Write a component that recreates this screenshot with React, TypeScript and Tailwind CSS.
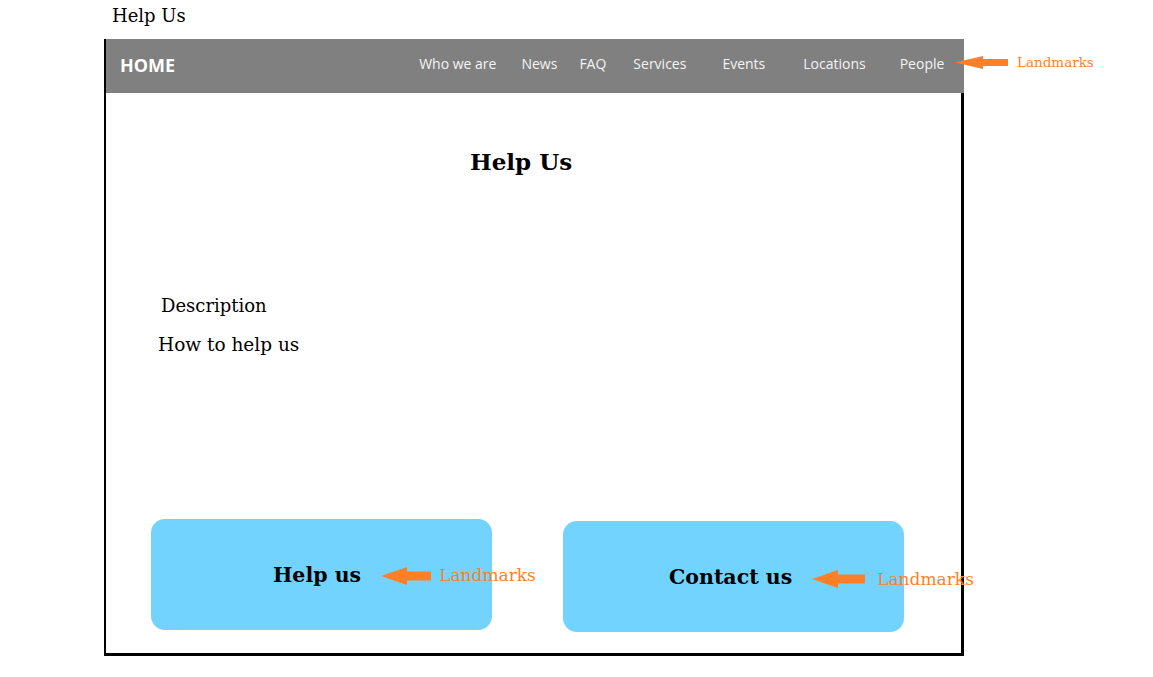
import React from "react";

const ORANGE = "#ff7f27";

function Arrow({ w, h, head, shaft }: { w: number; h: number; head: number; shaft: number }) {
  const mid = h / 2;
  return (
    <svg width={w} height={h} viewBox={`0 0 ${w} ${h}`} className="block shrink-0">
      <polygon
        points={`0,${mid} ${head},0 ${head},${mid - shaft / 2} ${w},${mid - shaft / 2} ${w},${mid + shaft / 2} ${head},${mid + shaft / 2} ${head},${h}`}
        fill={ORANGE}
      />
    </svg>
  );
}

const serif = "font-['DejaVu_Serif',serif]";
const sans = "font-['Open_Sans',sans-serif]";

function Box({ label, className, textPad, arrowGap, arrowW, labelGap }: { label: string; className: string; textPad: string; arrowGap: string; arrowW: number; labelGap: string }) {
  return (
    <div className={`relative h-[111px] w-[341px] shrink-0 rounded-[14px] bg-[#72d4fe] ${className}`}>
      <div className={`flex h-full items-center whitespace-nowrap ${textPad}`}>
        <span className={`${serif} shrink-0 text-[20.5px] font-bold text-black leading-none`}>{label}</span>
        <span className={`${arrowGap} shrink-0`}>
          <Arrow w={arrowW} h={18} head={26} shaft={9} />
        </span>
        <span className={`${serif} ${labelGap} shrink-0 text-[17px] leading-none text-[#ff7f27]`}>Landmarks</span>
      </div>
    </div>
  );
}

export default function App() {
  return (
    <div className="relative h-[677px] w-[1153px] bg-white overflow-hidden">
      <div className={`${serif} pl-[112px] pt-[4px] text-[18px] leading-[24px] text-black`}>Help Us</div>
      <div className="relative ml-[104px] mt-[11px] w-[860px] border-l-2 border-black">
        <nav className={`${sans} flex h-[54px] items-center bg-[#808080] pb-[6px] text-white`}>
          <span className="ml-[14px] mt-[3px] text-[18px] font-bold leading-none">HOME</span>
          <span className="ml-[244px] text-[14px] text-[#f4f4f4]">Who we are</span>
          <span className="ml-[25px] text-[14px] text-[#f4f4f4]">News</span>
          <span className="ml-[22px] text-[14px] text-[#f4f4f4]">FAQ</span>
          <span className="ml-[27px] text-[14px] text-[#f4f4f4]">Services</span>
          <span className="ml-[36px] text-[14px] text-[#f4f4f4]">Events</span>
          <span className="ml-[38px] text-[14px] text-[#f4f4f4]">Locations</span>
          <span className="ml-[34px] text-[14px] text-[#f4f4f4]">People</span>
        </nav>
        <div className="absolute left-[849px] top-[17px] flex items-center">
          <Arrow w={53} h={13} head={28} shaft={7} />
          <span className={`${serif} ml-[9px] text-[13.5px] leading-none text-[#ff7f27] whitespace-nowrap`}>Landmarks</span>
        </div>
        <main className="flex h-[563px] flex-col border-r-[3px] border-b-[3px] border-black">
          <h1 className={`${serif} pl-[364px] pt-[55px] text-[23px] font-bold leading-[28px] text-black`}>Help Us</h1>
          <p className={`${serif} pl-[55px] pt-[118px] text-[18px] leading-[24px] text-black`}>Description</p>
          <p className={`${serif} pl-[52px] pt-[15px] text-[18.5px] leading-[24px] text-black`}>How to help us</p>
          <div className="mt-[162px] flex items-start pl-[45px]">
            <Box label="Help us" className="" textPad="pl-[122px] pt-[2px]" arrowGap="ml-[20px]" arrowW={50} labelGap="ml-[8px]" />
            <Box label="Contact us" className="ml-[71px] mt-[2px]" textPad="pl-[106px] pt-[2px]" arrowGap="ml-[20px] mt-[2px]" arrowW={53} labelGap="ml-[12px] mt-[4px]" />
          </div>
        </main>
      </div>
    </div>
  );
}
